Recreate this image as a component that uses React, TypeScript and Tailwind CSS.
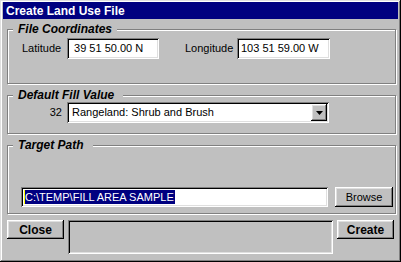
import type { ReactNode } from 'react'

const raised =
  'shadow-[inset_-1px_-1px_#000,inset_1px_1px_#fff,inset_-2px_-2px_#808080,inset_2px_2px_#dfdfdf]'
const sunken =
  'shadow-[inset_1px_1px_#808080,inset_-1px_-1px_#fff,inset_2px_2px_#000,inset_-2px_-2px_#dfdfdf]'

function GroupBox({
  label,
  labelWidth,
  className,
  children,
}: {
  label: string
  labelWidth: string
  className: string
  children: ReactNode
}) {
  return (
    <div
      className={`relative ml-[4px] w-[389px] border border-[#808080] shadow-[inset_1px_1px_#fff,1px_1px_#fff] ${className}`}
    >
      <div
        className={`absolute left-[5px] top-[-8px] h-[14px] bg-[#c0c0c0] px-[5px] text-[12px] font-bold italic leading-[14px] ${labelWidth}`}
      >
        {label}
      </div>
      {children}
    </div>
  )
}

function Field({ width, value }: { width: string; value: string }) {
  return (
    <div
      className={`h-[21px] bg-white pl-[4px] text-[11px] leading-[21px] whitespace-pre ${sunken} ${width}`}
    >
      {value}
    </div>
  )
}

export default function App() {
  return (
    <div
      className={`flex h-[262px] w-[401px] flex-col bg-[#c0c0c0] px-[3px] pt-[2px] font-['Liberation_Sans',Arial,sans-serif] text-black shadow-[inset_-1px_-1px_#000,inset_1px_1px_#dfdfdf,inset_-2px_-2px_#808080,inset_2px_2px_#fff]`}
    >
      {/* Title bar */}
      <div className="flex h-[17px] items-center bg-[#000080] pl-[3px] text-[12px] font-bold text-white">
        Create Land Use File
      </div>

      {/* File Coordinates */}
      <GroupBox label="File Coordinates" labelWidth="w-[104px]" className="mt-[10px] h-[55px]">
        <div className="flex items-center pl-[14px] pt-[8px] text-[11px]">
          <span className="w-[45px]">Latitude</span>
          <Field width="w-[92px]" value=" 39 51 50.00 N" />
          <span className="ml-[26px] w-[52px]">Longitude</span>
          <Field width="w-[93px]" value="103 51 59.00 W" />
        </div>
      </GroupBox>

      {/* Default Fill Value */}
      <GroupBox label="Default Fill Value" labelWidth="w-[110px]" className="mt-[11px] h-[39px]">
        <div className="flex items-center pt-[6px] text-[11px]">
          <span className="w-[59px] pr-[5px] text-right">32</span>
          <div className={`flex h-[21px] w-[262px] items-center bg-white pl-[5px] pr-[2px] ${sunken}`}>
            <span className="flex-1">Rangeland: Shrub and Brush</span>
            <div className={`flex h-[17px] w-[16px] items-center justify-center bg-[#c0c0c0] ${raised}`}>
              <svg width="7" height="4" viewBox="0 0 7 4">
                <path d="M0 0h7L3.5 4z" fill="#000" />
              </svg>
            </div>
          </div>
        </div>
      </GroupBox>

      {/* Target Path */}
      <GroupBox label="Target Path" labelWidth="w-[80px]" className="mt-[11px] h-[69px]">
        <div className="flex items-center pl-[13px] pt-[41px] text-[11px]">
          <div className={`h-[20px] w-[307px] bg-white pl-[3px] pt-[2px] ${sunken}`}>
            <span className="inline-block h-[14px] border-l border-[#ffff00] bg-[#000080] pr-[1px] leading-[14px] text-white">
              C:\TEMP\FILL AREA SAMPLE
            </span>
          </div>
          <button className={`ml-[7px] h-[20px] w-[58px] bg-[#c0c0c0] text-[11px] ${raised}`}>
            Browse
          </button>
        </div>
      </GroupBox>

      {/* Bottom row */}
      <div className="ml-[4px] mt-[6px] flex items-start">
        <button className={`h-[19px] w-[57px] bg-[#c0c0c0] text-[12px] font-bold ${raised}`}>
          Close
        </button>
        <div className="ml-[4px] h-[34px] w-[265px] shadow-[inset_1px_1px_#808080,inset_-1px_-1px_#fff,inset_2px_2px_#000,inset_-2px_-2px_#dfdfdf]" />
        <button className={`ml-[4px] h-[19px] w-[57px] bg-[#c0c0c0] text-[12px] font-bold ${raised}`}>
          Create
        </button>
      </div>
    </div>
  )
}
